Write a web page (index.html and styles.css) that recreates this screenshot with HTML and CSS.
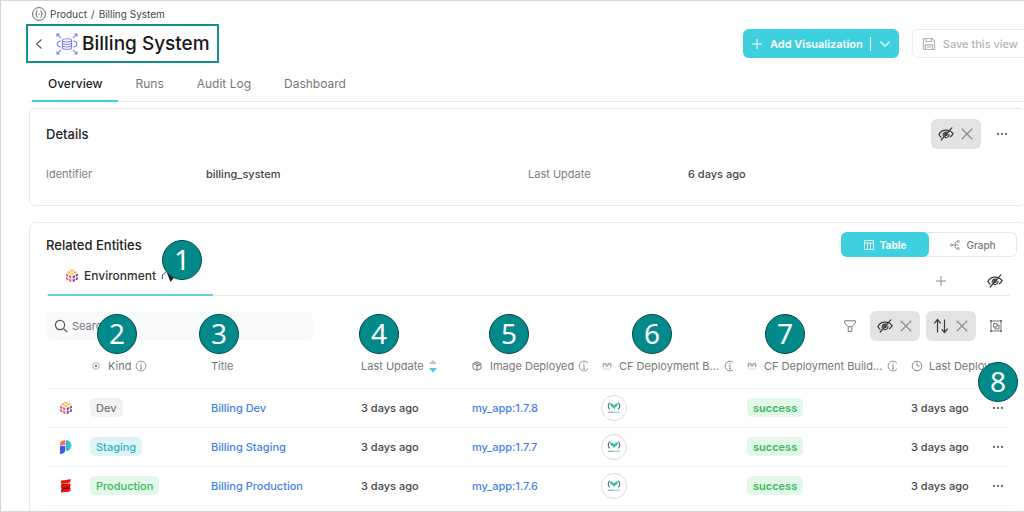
FILE: index.html
```html
<!DOCTYPE html>
<html lang="en">
<head>
<meta charset="utf-8">
<title>Billing System</title>
<meta name="viewport" content="width=device-width, initial-scale=1">
<link rel="stylesheet" href="styles.css">
</head>
<body>
<svg class="sprite" aria-hidden="true">
  <symbol id="eye-off" viewBox="0 0 16 16"><g fill="none" stroke="currentColor" stroke-width="1.2" stroke-linecap="round"><path d="M1 8.5C3 3.2 11 2.4 15 7.5"/><path d="M1 8.5c.5 1.2 1.2 2 2 2.700M15 7.500c-.5 1.500-1.500 2.600-2.700 3.300M5.200 9.800C4.600 7 7 5.400 9.600 6.300M7 11.400c2.500.6 4.300-1 3.900-3.200"/><circle cx="8" cy="8.500" r="1.200"/><path d="M3.200 14 13.800 1.800"/></g></symbol>
  <symbol id="close" viewBox="0 0 14 14"><path d="M2 2l10 10M12 2L2 12" fill="none" stroke="currentColor" stroke-width="1.100" stroke-linecap="round"/></symbol>
  <symbol id="dots" viewBox="0 0 12 12"><g fill="currentColor"><circle cx="2" cy="6" r="1.150"/><circle cx="6" cy="6" r="1.150"/><circle cx="10" cy="6" r="1.150"/></g></symbol>
  <symbol id="plus" viewBox="0 0 12 12"><path d="M6 1v10M1 6h10" fill="none" stroke="currentColor"/></symbol>
  <symbol id="info" viewBox="0 0 12 12"><circle cx="6" cy="6" r="4.900" fill="none" stroke="currentColor" stroke-width=".8"/><path d="M6 5.300v3.500M5 5.300h1M5 8.800h2" fill="none" stroke="currentColor" stroke-width=".8"/><circle cx="6" cy="3.500" r=".6" fill="currentColor"/></symbol>
  <symbol id="cube" viewBox="0 0 16 16">
    <path fill="#f6b73c" d="M8 .6l2.600 1.300L8 3.200 5.400 1.900zM11.600 2.400l2.600 1.300L11.600 5 9 3.700zM4.400 2.400 7 3.700 4.400 5 1.800 3.700zM8 4.200l2.600 1.300L8 6.800 5.400 5.500z"/>
    <path fill="#f0566c" d="M1.300 5.200l2.400 1.200v2.700L1.300 7.900zM4.700 6.900l2.500 1.200v2.700L4.700 9.600zM1.300 9.200l2.400 1.200v2.700l-2.400-1.200zM4.700 10.900l2.500 1.200v2.900l-2.500-1.200z"/>
    <path fill="#8a3f9e" d="M14.700 5.200l-2.400 1.200v2.700l2.400-1.200zM11.300 6.900 8.800 8.100v2.700l2.500-1.200zM14.700 9.200l-2.400 1.200v2.700l2.400-1.200zM11.300 10.900l-2.500 1.200v2.900l2.500-1.200z"/>
  </symbol>
  <symbol id="codefresh" viewBox="0 0 16 14"><g fill="none" stroke="#53616b" stroke-width="1.200"><path d="M3.200 1.500C.8 3.500.8 7 3.200 9.200M12.800 1.500c2.400 2 2.400 5.500 0 7.700"/></g><path fill="#2cc5a0" d="M3.500 2.200C5.800 2 7.300 3 8 5c.7-2 2.200-3 4.500-2.800C12.600 5 11 6.500 9 7c-.2 1-.5 1.600-1 2-.5-.4-.8-1-1-2-2-.5-3.600-2-3.500-4.800z"/><path d="M1 12.400h6.500" stroke="#8b959c" stroke-width="1.200"/><path d="M7.500 12.400H15" stroke="#7bdcc6" stroke-width="1.200"/></symbol>
  <symbol id="codefresh-mono" viewBox="0 0 16 14"><path d="M3 1.800C1.300 3.500 1.300 7 3 9M13 1.800c1.700 1.700 1.700 5.200 0 7.200M3.500 2.500 8 8l4.500-5.500M5.500 2.500 8 5l2.500-2.500" fill="none" stroke="currentColor" stroke-width="1.400"/><path d="M1.500 11.800h13" stroke="currentColor" opacity=".45"/></symbol>
</svg>

<main class="page">
  <header class="top">
    <nav class="crumbs" aria-label="Breadcrumb">
      <svg class="crumb-icon" viewBox="0 0 14 14" aria-hidden="true"><g fill="none" stroke="#555" stroke-width=".9"><circle cx="7" cy="7" r="6.400"/><path d="M5.600 3.500c-1.500 0-.8 1.600-1 2.500-.1.600-.5 1-1.100 1 .6 0 1 .4 1.100 1 .2.900-.5 2.500 1 2.500M8.400 3.500c1.500 0 .8 1.600 1 2.500.1.600.5 1 1.100 1-.6 0-1 .4-1.100 1-.2.900.5 2.500-1 2.500M6 7h.7M7.300 7H8"/></g></svg>
      <a href="#">Product</a><span>/</span><a href="#">Billing System</a>
    </nav>
    <div class="title-row">
      <div class="title-box">
        <button class="icon-btn" aria-label="Back"><svg class="i-back" viewBox="0 0 8 12"><path d="M6.500 1.500 1.500 6l5 4.500" fill="none" stroke="#555" stroke-width="1.100"/></svg></button>
        <svg class="i-entity" viewBox="0 0 24 24" aria-hidden="true"><g fill="none" stroke="#7d83ee" stroke-width="1.200"><ellipse cx="12" cy="8" rx="5" ry="1.800"/><path d="M7 8v8c0 1 2.200 1.800 5 1.800s5-.8 5-1.800V8M7 10.700c0 1 2.200 1.800 5 1.800s5-.8 5-1.800M7 13.400c0 1 2.200 1.800 5 1.800s5-.8 5-1.800M5 8.500C0 10 0 14 5 15.500M19 8.500c5 1.500 5 5.500 0 7"/><path d="m5.500 5.500-4-4M18.500 5.500l4-4M5.500 18.500l-4 4M18.500 18.500l4 4"/></g><path fill="#7d83ee" d="M.5.500h4l-4 4zM23.500.500v4l-4-4zM.5 23.500v-4l4 4zM23.500 23.500h-4l4-4z"/></svg>
        <h1>Billing System</h1>
      </div>
      <div class="actions">
        <div class="split">
          <button class="add"><svg class="i12" aria-hidden="true"><use href="#plus"/></svg>Add Visualization</button>
          <button class="more" aria-label="More visualizations"><svg class="i12" viewBox="0 0 12 12"><path d="m1.500 3.800 4.500 4.400 4.500-4.400" fill="none" stroke="currentColor" stroke-width="1.300"/></svg></button>
        </div>
        <button class="save" disabled><svg class="i14" viewBox="0 0 14 14" aria-hidden="true"><path d="M1.500 1.500h8.700l2.300 2.300v8.700h-11zM4 1.500v3h5.500v-3M3.500 12.500V7.800h7v4.700M5 10h4" fill="none" stroke="currentColor" stroke-width="1.200" stroke-linejoin="round"/></svg>Save this view</button>
      </div>
    </div>
    <nav class="tabs" aria-label="Sections">
      <a class="active" href="#">Overview</a><a href="#">Runs</a><a href="#">Audit Log</a><a href="#">Dashboard</a>
    </nav>
  </header>

  <section class="card details">
    <div class="card-head">
      <h2>Details</h2>
      <div class="tools">
        <div class="chip"><button class="icon-btn" aria-label="Hidden properties"><svg class="i16"><use href="#eye-off"/></svg></button><button class="icon-btn" aria-label="Clear"><svg class="i14 soft"><use href="#close"/></svg></button></div>
        <button class="icon-btn dots" aria-label="More"><svg class="i12"><use href="#dots"/></svg></button>
      </div>
    </div>
    <dl class="fields">
      <div><dt>Identifier</dt><dd>billing_system</dd></div>
      <div><dt>Last Update</dt><dd>6 days ago</dd></div>
    </dl>
  </section>

  <section class="card related">
    <div class="related-head">
      <h2>Related Entities</h2>
      <div class="switch">
        <button class="on"><svg class="i10" viewBox="0 0 10 10" aria-hidden="true"><path d="M.5.5h9v9h-9zM.5 3h9M3.500 3v6.500M6.500 3v6.500" fill="none" stroke="currentColor" stroke-width=".8"/></svg>Table</button>
        <button><svg class="i10" viewBox="0 0 10 10" aria-hidden="true"><g fill="none" stroke="currentColor" stroke-width=".8"><circle cx="1.500" cy="5" r="1"/><circle cx="8.300" cy="1.500" r="1"/><circle cx="8.300" cy="8.500" r="1"/><path d="M2.500 5h2.700M7.300 1.500C5 1.500 5.200 3 5.200 5s-.2 3.500 2.100 3.500M5.200 5h3.500"/></g></svg>Graph</button>
      </div>
    </div>
    <div class="subtabs">
      <a class="subtab" href="#"><svg class="i14" aria-hidden="true"><use href="#cube"/></svg>Environment<svg class="i-pin" viewBox="0 0 14 14" aria-hidden="true"><path d="M1.500 10C.5 7 2 4.500 4.500 3.500" fill="none" stroke="#333"/><path d="M6 4h8v3l-4.500 6z" fill="#222"/></svg></a>
      <div class="subtab-tools">
        <button class="icon-btn" aria-label="Add tab"><svg class="i12 soft"><use href="#plus"/></svg></button>
        <button class="icon-btn" aria-label="Hide tabs"><svg class="i16"><use href="#eye-off"/></svg></button>
      </div>
    </div>
    <div class="toolbar">
      <label class="search"><svg class="i14" viewBox="0 0 14 14" aria-hidden="true"><g fill="none" stroke="#555" stroke-width="1.200"><circle cx="6" cy="6" r="4.600"/><path d="m9.500 9.500 3.700 3.700"/></g></svg><input type="text" aria-label="Search" placeholder="Search"></label>
      <div class="toolbar-tools">
        <button class="icon-btn filter" aria-label="Filter"><svg class="i12" viewBox="0 0 12 12"><path d="M.6.8h10.800v2L7.800 6.700v4.700H4.200V6.700L.6 2.800zM4.200 6.700h3.600" fill="none" stroke="#777" stroke-linejoin="round"/></svg></button>
        <div class="chip"><button class="icon-btn" aria-label="Hidden columns"><svg class="i16"><use href="#eye-off"/></svg></button><button class="icon-btn" aria-label="Clear hidden"><svg class="i14 soft"><use href="#close"/></svg></button></div>
        <div class="chip sort-chip"><button class="icon-btn" aria-label="Sort"><svg class="i16" viewBox="0 0 16 16"><path d="M4.500 14.500v-13M1.300 5.300l3.200-3.800 3.200 3.800M11.500 1.500v13M8.800 11.300l2.700 3.200 3.200-3.800" fill="none" stroke="#3b3b3b" stroke-width="1.200"/></svg></button><button class="icon-btn" aria-label="Clear sort"><svg class="i14 soft"><use href="#close"/></svg></button></div>
        <button class="icon-btn" aria-label="Group by"><svg class="i12" viewBox="0 0 12 12"><g fill="none" stroke="#777"><path d="M1 1h10v10H1z"/><path d="M3.500 3.500h3.500v3.500H3.500zM7 5h2v4H5V7"/></g><path fill="#777" d="M0 0h2v2H0zM10 0h2v2h-2zM0 10h2v2H0zM10 10h2v2h-2z"/></svg></button>
      </div>
    </div>

    <table>
      <colgroup><col class="c-icon"><col class="c-kind"><col class="c-title"><col class="c-update"><col class="c-image"><col class="c-cf"><col class="c-status"><col><col class="c-more"></colgroup>
      <thead>
        <tr>
          <th></th>
          <th><span class="th"><svg class="i8" viewBox="0 0 8 8" aria-hidden="true"><circle cx="4" cy="4" r="3.300" fill="none" stroke="#999" stroke-width=".8"/><circle cx="4" cy="4" r="1.200" fill="#777"/></svg><span class="label">Kind</span><svg class="i12"><use href="#info"/></svg></span></th>
          <th><span class="th">Title</span></th>
          <th><span class="th sorted">Last Update<svg class="i-sort" viewBox="0 0 8 14" aria-hidden="true"><path d="m4 1 4 4H0z" fill="#c4c4c4"/><path d="M0 9h8l-4 4.500z" fill="#3fd0df"/></svg></span></th>
          <th><span class="th"><svg class="i10" viewBox="0 0 10 10" aria-hidden="true"><path d="m5 .7 4 1.800v5L5 9.300 1 7.500v-5zM1 2.500l4 2 4-2M5 4.500v4.800M3 1.600l4 2v1.500" fill="none" stroke="currentColor"/></svg><span class="label">Image Deployed</span><svg class="i12"><use href="#info"/></svg></span></th>
          <th><span class="th cf-head"><svg class="i10"><use href="#codefresh-mono"/></svg><span class="label">CF Deployment B...</span><svg class="i12"><use href="#info"/></svg></span></th>
          <th><span class="th cf-head"><svg class="i10"><use href="#codefresh-mono"/></svg><span class="label">CF Deployment Build...</span><svg class="i12"><use href="#info"/></svg></span></th>
          <th colspan="2"><span class="th"><svg class="i12" viewBox="0 0 12 12" aria-hidden="true"><path d="M6 2.500V6h2.500" fill="none" stroke="currentColor" stroke-width=".9"/><circle cx="6" cy="6" r="4.800" fill="none" stroke="currentColor" stroke-width=".9"/></svg><span class="label last">Last Deploym...</span></span></th>
        </tr>
      </thead>
      <tbody>
        <tr>
          <td class="logo"><svg class="i14"><use href="#cube"/></svg></td>
          <td><span class="tag gray">Dev</span></td>
          <td><a href="#">Billing Dev</a></td>
          <td>3 days ago</td>
          <td><a href="#">my_app:1.7.8</a></td>
          <td class="cf"><span class="round"><svg class="i-cf"><use href="#codefresh"/></svg></span></td>
          <td><span class="tag green strong">success</span></td>
          <td>3 days ago</td>
          <td class="row-more"><button class="icon-btn dots" aria-label="Row actions"><svg class="i12"><use href="#dots"/></svg></button></td>
        </tr>
        <tr>
          <td class="logo"><svg class="i14" viewBox="0 0 14 14"><defs><linearGradient id="teal-fade" x2="1"><stop stop-color="#2ba9ea"/><stop offset="1" stop-color="#3fe0b0"/></linearGradient></defs><path fill="#ff6b57" d="M1 5V4.500C1 2 2.500.500 5 .200H6.300V5z"/><path fill="url(#teal-fade)" d="M7 .200C10.500.200 12.500 2.500 12.500 5.500S10.500 10.800 7 10.800z"/><path fill="#3b5bea" d="M1 5.800h5.300v4C6.300 12.300 4 14 1 14z"/></svg></td>
          <td><span class="tag teal">Staging</span></td>
          <td><a href="#">Billing Staging</a></td>
          <td>3 days ago</td>
          <td><a href="#">my_app:1.7.7</a></td>
          <td class="cf"><span class="round"><svg class="i-cf"><use href="#codefresh"/></svg></span></td>
          <td><span class="tag green strong">success</span></td>
          <td>3 days ago</td>
          <td class="row-more"><button class="icon-btn dots" aria-label="Row actions"><svg class="i12"><use href="#dots"/></svg></button></td>
        </tr>
        <tr>
          <td class="logo"><svg class="i14" viewBox="0 0 14 14"><path fill="#6d0808" d="M2.500 4.500h8.500v6.500H2.500z"/><path fill="#ea1410" d="M2 1.500C5.500 1.200 9 1 11.500 0v3c-2.500 1-6 1.300-9.500 1.600zM2 6c3.500-.3 7-.6 9.500-1.500v3C9 8.500 5.500 8.800 2 9.100zM2 10.500c3.500-.3 7-.6 9.500-1.500v3c-2.500 1-6 1.300-9.500 1.600z"/></svg></td>
          <td><span class="tag green">Production</span></td>
          <td><a href="#">Billing Production</a></td>
          <td>3 days ago</td>
          <td><a href="#">my_app:1.7.6</a></td>
          <td class="cf"><span class="round"><svg class="i-cf"><use href="#codefresh"/></svg></span></td>
          <td><span class="tag green strong">success</span></td>
          <td>3 days ago</td>
          <td class="row-more"><button class="icon-btn dots" aria-label="Row actions"><svg class="i12"><use href="#dots"/></svg></button></td>
        </tr>
      </tbody>
    </table>
  </section>

  <span class="pin pin-1">1</span>
  <span class="pin pin-2">2</span>
  <span class="pin pin-3">3</span>
  <span class="pin pin-4">4</span>
  <span class="pin pin-5">5</span>
  <span class="pin pin-6">6</span>
  <span class="pin pin-7">7</span>
  <span class="pin pin-8">8</span>
</main>
</body>
</html>
```

FILE: styles.css
```css
* { box-sizing: border-box; }

body {
  margin: 0;
  background: #fff;
  color: #454545;
  font: 500 11px/16px Inter, "Liberation Sans", sans-serif;
}

button, input { font: inherit; color: inherit; }
button { border: 0; padding: 0; background: none; cursor: pointer; }
a { color: inherit; text-decoration: none; }
h1, h2, dl, dd { margin: 0; }
svg { display: block; flex: none; }

.sprite { position: absolute; width: 0; height: 0; }
.i8 { width: 8px; height: 8px; }
.i10 { width: 10px; height: 10px; }
.i12 { width: 12px; height: 12px; }
.i14 { width: 14px; height: 14px; }
.i16 { width: 16px; height: 16px; }
.soft { color: #8a8a8a; }
.icon-btn { display: flex; }
.dots { color: #6a6a6a; }

.page {
  position: relative;
  height: 100vh;
  overflow: hidden;
  padding-left: 28px;
  border: solid #d6d6d6;
  border-width: 1px 0 1px 1px;
}

/* Header */
.crumbs {
  display: flex;
  align-items: center;
  gap: 4px;
  height: 23px;
  padding: 2px 0 0 3px;
  font-size: 10px;
  font-weight: 400;
  color: #444;
}
.crumb-icon { width: 14px; height: 14px; }

.title-row {
  display: flex;
  align-items: center;
  justify-content: space-between;
}
.title-box {
  display: flex;
  align-items: center;
  height: 39px;
  margin-left: -3px;
  padding: 0 7px;
  border: 2px solid #148f8f;
}
.i-back { width: 8px; height: 12px; }
.i-entity { width: 22px; height: 22px; margin: 0 4px 0 13px; }
h1 { font-size: 19px; line-height: 24px; font-weight: 500; color: #181818; }

.actions { display: flex; gap: 13px; margin-right: -12px; font-weight: 600; }
.split {
  display: flex;
  height: 29px;
  align-items: center;
  border-radius: 6px;
  background: #3fd0df;
  color: #fff;
}
.add { display: flex; align-items: center; gap: 7px; padding: 0 7px 0 8px; }
.more { display: flex; padding: 1px 8px; border-left: 1px solid #fff; }
.save {
  display: flex;
  align-items: center;
  gap: 7px;
  height: 29px;
  padding: 0 17px 0 9px;
  border: 1px solid #ececec;
  border-radius: 6px;
  color: #b4b4b4;
  font-weight: 500;
}

.tabs {
  display: flex;
  gap: 1px;
  height: 39px;
  padding-left: 3px;
  border-bottom: 1px solid #e9e9e9;
  font-size: 12px;
  font-weight: 400;
  color: #777;
}
.tabs a { padding: 13px 16px 0; height: 39px; }
.tabs .active { color: #222; font-weight: 500; border-bottom: 2px solid #3fd0df; }

/* Cards */
.card {
  margin-right: -2px;
  border: 1px solid #e9e9e9;
  border-radius: 6px;
  padding: 0 15px 0 16px;
}
h2 { font-size: 13px; line-height: 16px; font-weight: 500; color: #222; }

.details { margin-top: 6px; height: 98px; }
.card-head { display: flex; align-items: center; justify-content: space-between; height: 50px; }
.tools { display: flex; align-items: center; gap: 15px; padding-right: 2px; }
.chip {
  display: flex;
  align-items: center;
  gap: 6px;
  height: 30px;
  padding: 0 7px;
  border-radius: 6px;
  background: #e3e3e3;
  color: #3b3b3b;
}
.fields { display: grid; grid-template-columns: 1fr 1fr; padding-top: 7px; }
.fields div { display: flex; }
dt { width: 160px; font-weight: 400; color: #7d7d7d; }

.related { margin-top: 16px; height: 320px; }
.related-head { display: flex; align-items: center; justify-content: space-between; height: 43px; }
.switch {
  display: grid;
  grid-template-columns: 88px 88px;
  height: 25px;
  margin-right: -7px;
  border-radius: 6px;
  box-shadow: inset 0 0 0 1px #e6e6e6;
  font-size: 10px;
  line-height: 14px;
  color: #777;
}
.switch button { display: flex; align-items: center; justify-content: center; gap: 6px; border-radius: 6px; }
.switch .on { background: #3fd0df; color: #fff; font-weight: 700; }

.subtabs {
  display: flex;
  justify-content: space-between;
  height: 30px;
  border-bottom: 1px solid #e9e9e9;
}
.subtab {
  display: flex;
  gap: 5px;
  align-items: center;
  width: 165px;
  height: 30px;
  margin-left: 2px;
  padding: 0 0 8px 17px;
  border-bottom: 2px solid #5ed2de;
  font-size: 12px;
  color: #333;
}
.i-pin { width: 14px; height: 14px; }
.subtab-tools { display: flex; gap: 40px; align-items: center; padding-right: 7px; color: #3b3b3b; }

.toolbar { display: flex; align-items: center; justify-content: space-between; height: 60px; }
.search {
  display: flex;
  align-items: center;
  gap: 4px;
  width: 267px;
  height: 28px;
  padding: 0 8px;
  border-radius: 6px;
  background: #f8f9fb;
}
.search input { flex: 1; min-width: 0; border: 0; padding: 0; outline: 0; background: none; font-weight: 400; }
.search input::placeholder { color: #777; opacity: 1; }
.toolbar-tools { display: flex; align-items: center; gap: 6px; padding-right: 8px; }
.filter { margin-right: 8px; }
.sort-chip { margin-right: 8px; }

/* Table */
table { width: 100%; border-collapse: collapse; table-layout: fixed; }
.c-icon { width: 32px; }
.c-kind { width: 121px; }
.c-title { width: 150px; }
.c-update { width: 111px; }
.c-image { width: 130px; }
.c-cf { width: 145px; }
.c-status { width: 164px; }
.c-more { width: 28px; }

tr { height: 39px; border-bottom: 1px solid #f3f3f3; }
thead tr { height: 32px; }
th, td { padding: 0 0 0 12px; text-align: left; white-space: nowrap; }
th { padding-bottom: 11px; overflow: hidden; font-weight: 400; color: #777; }
.th { display: flex; align-items: center; gap: 4px; overflow: hidden; margin-right: 2px; }
.sorted { gap: 5px; }
.cf-head { gap: 5px; }
.i-sort { width: 8px; height: 14px; }
.label { padding-left: 4px; }
.label.last, .cf-head .label { padding-left: 2px; }
td a { color: #3f83e8; }
.logo { padding-left: 13px; }
th:nth-child(2) { padding-left: 14px; }
.cf { padding-left: 11px; }
.row-more { padding-left: 10px; }

.tag {
  display: inline-block;
  height: 19px;
  padding: 2px 6px;
  line-height: 16px;
  border-radius: 5px;
  vertical-align: middle;
}
.gray { background: #f2f2f2; color: #777; }
.teal { background: #dff4f6; color: #2fb3c0; }
.green { background: #e2f8e8; color: #3cb85c; }
.strong { font-weight: 600; }
.round {
  display: flex;
  align-items: center;
  justify-content: center;
  width: 26px;
  height: 26px;
  border: 1px solid #ddd;
  border-radius: 50%;
}
.i-cf { width: 14px; height: 13px; }

/* Numbered callouts over the screen */
.pin {
  position: absolute;
  display: flex;
  align-items: center;
  justify-content: center;
  width: 40px;
  height: 40px;
  padding-bottom: 2px;
  border: 1px solid #05494b;
  border-radius: 50%;
  background: #028a8a;
  color: #fff;
  font: 400 28px/36px "Noto Sans", "Open Sans", sans-serif;
  top: 313px;
}
.pin-1 { left: 161px; top: 239px; }
.pin-2 { left: 96px; }
.pin-3 { left: 198px; }
.pin-4 { left: 358px; }
.pin-5 { left: 488px; }
.pin-6 { left: 631px; }
.pin-7 { left: 764px; }
.pin-8 { left: 977px; top: 361px; }
```
